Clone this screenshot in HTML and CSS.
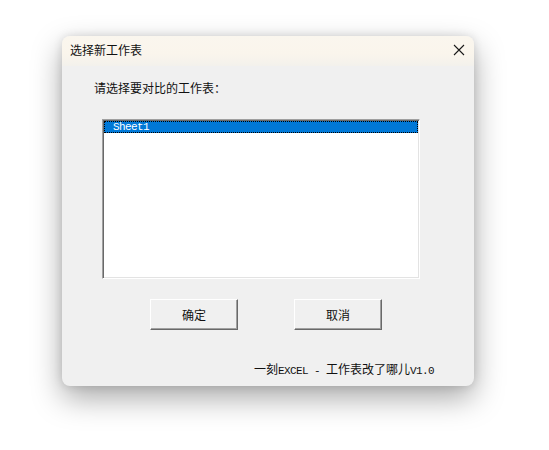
FILE: index.html
```html
<!DOCTYPE html>
<html lang="zh">
<head>
<meta charset="utf-8">
<link rel="stylesheet" href="styles.css">
</head>
<body>
<div class="window">
  <div class="titlebar">
    <span class="title">选择新工作表</span>
    <span class="close">
      <svg width="12" height="12" viewBox="0 0 12 12"><path d="M1 1 L11 11 M11 1 L1 11" stroke="#1a1a1a" stroke-width="1.1" fill="none"/></svg>
    </span>
  </div>
  <div class="content">
    <div class="label">请选择要对比的工作表：</div>
    <div class="listbox">
      <div class="item selected">Sheet1</div>
    </div>
    <div class="buttons">
      <div class="btn">确定</div>
      <div class="btn">取消</div>
    </div>
    <div class="footer">一刻<span class="lat">EXCEL - </span>工作表改了哪儿<span class="lat">V1.0</span></div>
  </div>
</div>
</body>
</html>
```
FILE: styles.css
```css
html, body {
  margin: 0;
  padding: 0;
  background: #ffffff;
}
body {
  width: 549px;
  height: 450px;
  overflow: hidden;
  font-family: "Noto Sans CJK SC", "Liberation Sans", sans-serif;
  color: #111;
}
.window {
  width: 412px;
  height: 350px;
  margin: 36px 0 0 62px;
  border-radius: 8px;
  background: #f0f0f0;
  box-shadow: 0 12px 30px rgba(0,0,0,0.34), 0 0 10px rgba(0,0,0,0.12);
  overflow: hidden;
  display: flex;
  flex-direction: column;
}
.titlebar {
  height: 30px;
  flex: none;
  background: linear-gradient(to bottom, #faf6ee 0%, #faf5ec 60%, #f3f1ec 100%);
  display: flex;
  align-items: center;
  justify-content: space-between;
  padding: 0 9px 0 8px;
}
.title {
  font-size: 12px;
  line-height: 14px;
  margin-top: -2px;
}
.close {
  display: flex;
  width: 12px;
  height: 12px;
  margin-top: -3px;
}
.content {
  display: flex;
  flex-direction: column;
  align-items: flex-start;
  padding: 15px 0 0 32px;
}
.label {
  font-size: 12px;
  line-height: 14px;
}
.listbox {
  margin: 24px 0 0 8px;
  width: 314px;
  height: 156px;
  background: #fff;
  border: 1px solid;
  border-color: #a0a0a0 #ffffff #ffffff #a0a0a0;
  box-shadow: inset 1px 1px #696969, inset -1px -1px #e3e3e3;
  padding: 1px;
  box-sizing: content-box;
}
.item {
  height: 12px;
  line-height: 12px;
  font-family: "Liberation Mono", "DejaVu Sans Mono", monospace;
  font-size: 11px;
  letter-spacing: -0.6px;
  padding-left: 9px;
}
.selected {
  background: #0078d7;
  color: #fff;
  outline: 1px dotted #000;
  outline-offset: -1px;
}
.buttons {
  display: flex;
  gap: 56px;
  margin: 20px 0 0 56px;
}
.btn {
  width: 86px;
  height: 29px;
  background: #f0f0f0;
  border: 1px solid;
  border-color: #ffffff #696969 #696969 #ffffff;
  box-shadow: inset -1px -1px #a0a0a0;
  display: flex;
  align-items: center;
  justify-content: center;
  font-size: 12px;
}
.footer {
  margin: 32px 0 0 160px;
  font-size: 12px;
  line-height: 14px;
  white-space: pre;
}
.lat {
  font-family: "Liberation Mono", monospace;
  font-size: 11px;
  letter-spacing: -0.6px;
}
```
